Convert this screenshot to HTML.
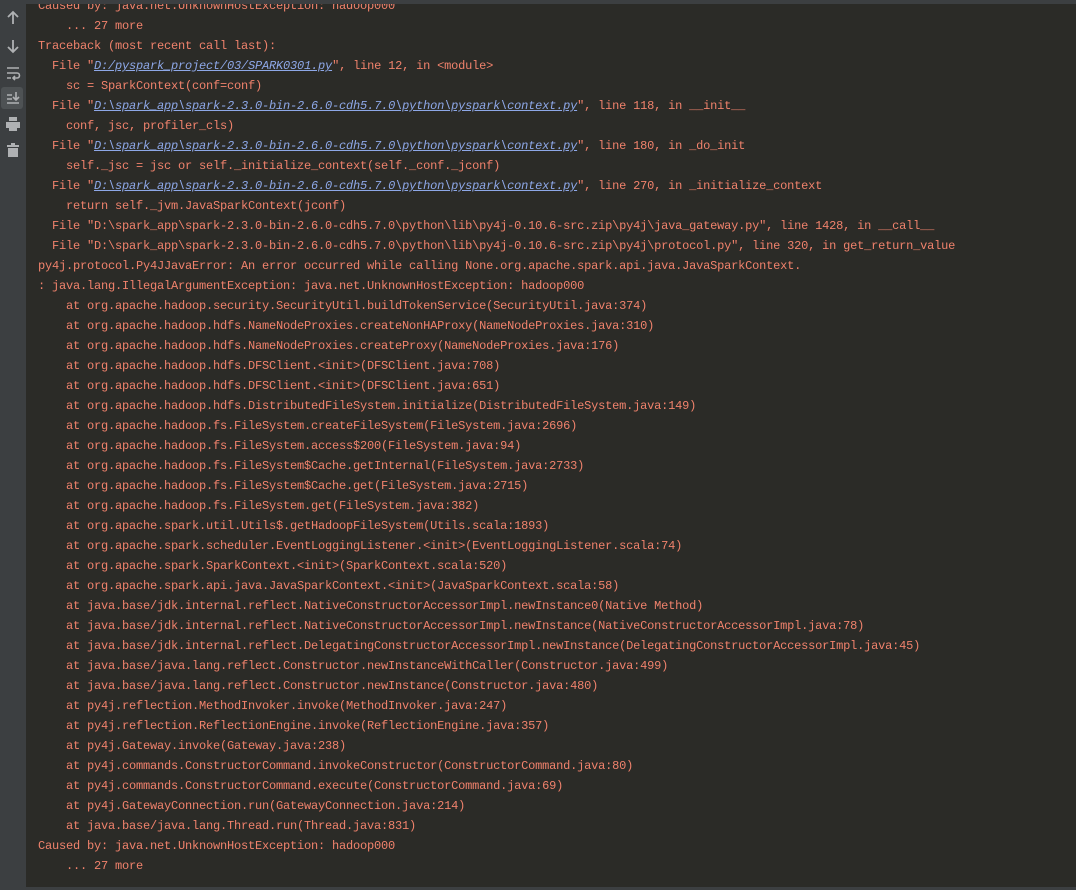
<!DOCTYPE html>
<html><head><meta charset="utf-8"><style>
html,body{margin:0;padding:0;width:1076px;height:890px;overflow:hidden;background:#2b2b27;}
#top{position:absolute;left:0;top:0;width:1076px;height:4px;background:#3c3f41;}
#bot{position:absolute;left:0;top:887px;width:1076px;height:3px;background:#3c3f41;}
#tb{position:absolute;left:0;top:0;width:26px;height:890px;background:#3c3f41;}
#tb svg{position:absolute;left:3px;}
#sel{position:absolute;left:1px;top:87px;width:22px;height:22px;background:#4e5254;border-radius:3px;}
pre{position:absolute;left:38px;top:-4px;margin:0;font-family:"Liberation Mono",monospace;font-size:12px;letter-spacing:-0.2px;line-height:20px;color:#f0826c;white-space:pre;}
a{color:#8ea8e8;font-style:italic;text-decoration:underline;}
</style></head><body>
<div id="top"></div>
<div id="tb">
<div id="sel"></div>
<svg style="top:8px" width="20" height="20" viewBox="0 0 20 20"><path d="M10 4v12M5 9l5-5 5 5" stroke="#afb1b3" stroke-width="1.8" fill="none"/></svg>
<svg style="top:36px" width="20" height="20" viewBox="0 0 20 20"><path d="M10 4v12M5 11l5 5 5-5" stroke="#afb1b3" stroke-width="1.8" fill="none"/></svg>
<svg style="top:63px" width="20" height="20" viewBox="0 0 20 20"><path d="M4 5h12M4 10h10a2.5 2.5 0 0 1 0 5h-4M12 13l-2 2 2 2M4 15h4" stroke="#afb1b3" stroke-width="1.6" fill="none"/></svg>
<svg style="top:88px" width="20" height="20" viewBox="0 0 20 20"><path d="M4 7h5M4 11h5M4 15h12M13 4v8M10 9l3 3 3-3" stroke="#afb1b3" stroke-width="1.6" fill="none"/></svg>
<svg style="top:114px" width="20" height="20" viewBox="0 0 20 20"><rect x="6" y="3" width="8" height="4" fill="#afb1b3"/><rect x="3" y="8" width="14" height="6" fill="#afb1b3"/><rect x="6" y="13" width="8" height="4" fill="#afb1b3"/></svg>
<svg style="top:140px" width="20" height="20" viewBox="0 0 20 20"><rect x="4" y="5" width="12" height="2" fill="#afb1b3"/><rect x="8" y="3" width="4" height="2" fill="#afb1b3"/><rect x="5" y="8" width="10" height="9" fill="#afb1b3"/></svg>
</div>
<pre>Caused by: java.net.UnknownHostException: hadoop000
    ... 27 more
Traceback (most recent call last):
  File "<a>D:/pyspark_project/03/SPARK0301.py</a>", line 12, in &lt;module&gt;
    sc = SparkContext(conf=conf)
  File "<a>D:\spark_app\spark-2.3.0-bin-2.6.0-cdh5.7.0\python\pyspark\context.py</a>", line 118, in __init__
    conf, jsc, profiler_cls)
  File "<a>D:\spark_app\spark-2.3.0-bin-2.6.0-cdh5.7.0\python\pyspark\context.py</a>", line 180, in _do_init
    self._jsc = jsc or self._initialize_context(self._conf._jconf)
  File "<a>D:\spark_app\spark-2.3.0-bin-2.6.0-cdh5.7.0\python\pyspark\context.py</a>", line 270, in _initialize_context
    return self._jvm.JavaSparkContext(jconf)
  File "D:\spark_app\spark-2.3.0-bin-2.6.0-cdh5.7.0\python\lib\py4j-0.10.6-src.zip\py4j\java_gateway.py", line 1428, in __call__
  File "D:\spark_app\spark-2.3.0-bin-2.6.0-cdh5.7.0\python\lib\py4j-0.10.6-src.zip\py4j\protocol.py", line 320, in get_return_value
py4j.protocol.Py4JJavaError: An error occurred while calling None.org.apache.spark.api.java.JavaSparkContext.
: java.lang.IllegalArgumentException: java.net.UnknownHostException: hadoop000
    at org.apache.hadoop.security.SecurityUtil.buildTokenService(SecurityUtil.java:374)
    at org.apache.hadoop.hdfs.NameNodeProxies.createNonHAProxy(NameNodeProxies.java:310)
    at org.apache.hadoop.hdfs.NameNodeProxies.createProxy(NameNodeProxies.java:176)
    at org.apache.hadoop.hdfs.DFSClient.&lt;init&gt;(DFSClient.java:708)
    at org.apache.hadoop.hdfs.DFSClient.&lt;init&gt;(DFSClient.java:651)
    at org.apache.hadoop.hdfs.DistributedFileSystem.initialize(DistributedFileSystem.java:149)
    at org.apache.hadoop.fs.FileSystem.createFileSystem(FileSystem.java:2696)
    at org.apache.hadoop.fs.FileSystem.access$200(FileSystem.java:94)
    at org.apache.hadoop.fs.FileSystem$Cache.getInternal(FileSystem.java:2733)
    at org.apache.hadoop.fs.FileSystem$Cache.get(FileSystem.java:2715)
    at org.apache.hadoop.fs.FileSystem.get(FileSystem.java:382)
    at org.apache.spark.util.Utils$.getHadoopFileSystem(Utils.scala:1893)
    at org.apache.spark.scheduler.EventLoggingListener.&lt;init&gt;(EventLoggingListener.scala:74)
    at org.apache.spark.SparkContext.&lt;init&gt;(SparkContext.scala:520)
    at org.apache.spark.api.java.JavaSparkContext.&lt;init&gt;(JavaSparkContext.scala:58)
    at java.base/jdk.internal.reflect.NativeConstructorAccessorImpl.newInstance0(Native Method)
    at java.base/jdk.internal.reflect.NativeConstructorAccessorImpl.newInstance(NativeConstructorAccessorImpl.java:78)
    at java.base/jdk.internal.reflect.DelegatingConstructorAccessorImpl.newInstance(DelegatingConstructorAccessorImpl.java:45)
    at java.base/java.lang.reflect.Constructor.newInstanceWithCaller(Constructor.java:499)
    at java.base/java.lang.reflect.Constructor.newInstance(Constructor.java:480)
    at py4j.reflection.MethodInvoker.invoke(MethodInvoker.java:247)
    at py4j.reflection.ReflectionEngine.invoke(ReflectionEngine.java:357)
    at py4j.Gateway.invoke(Gateway.java:238)
    at py4j.commands.ConstructorCommand.invokeConstructor(ConstructorCommand.java:80)
    at py4j.commands.ConstructorCommand.execute(ConstructorCommand.java:69)
    at py4j.GatewayConnection.run(GatewayConnection.java:214)
    at java.base/java.lang.Thread.run(Thread.java:831)
Caused by: java.net.UnknownHostException: hadoop000
    ... 27 more</pre>
<div id="top"></div>
<div id="bot"></div>
</body></html>
